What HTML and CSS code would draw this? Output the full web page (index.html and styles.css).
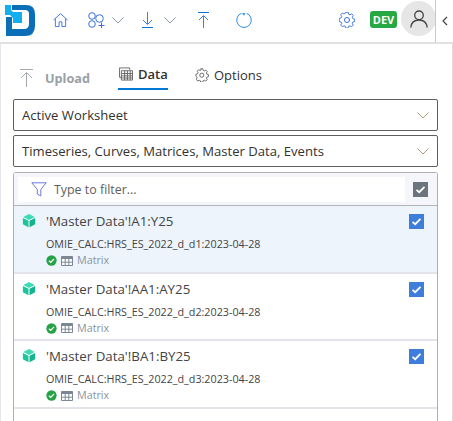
FILE: index.html
```html
<!DOCTYPE html>
<html lang="en">
<head>
    <meta charset="UTF-8">
    <meta name="viewport" content="width=device-width, initial-scale=1.0">
    <title>Data Upload</title>
    <link rel="stylesheet" href="styles.css">
</head>
<body>
    <svg class="sprites" width="0" height="0" aria-hidden="true">
        <symbol id="cube" viewBox="0 0 16 16">
            <path d="M8 .5 14.5 4 8 7.4 1.5 4z" fill="#3bdcb4"/>
            <path d="M1 5 7.4 8.4V15.6L1 12.2z" fill="#1cc49c"/>
            <path d="M15 5 8.6 8.4V15.6L15 12.2z" fill="#14b48e"/>
        </symbol>
        <symbol id="ok" viewBox="0 0 12 12">
            <circle cx="6" cy="6" r="5.6" fill="#25a244"/>
            <path d="M3.2 6.2 5.2 8.1 8.8 4.2" fill="none" stroke="#fff" stroke-width="1.4"/>
        </symbol>
        <symbol id="grid" viewBox="0 0 12 10">
            <path d="M.5.5h11v9H.5z" fill="#fff" stroke="#7d8794"/>
            <path d="M.5.5h11v2.5H.5z" fill="#7d8794"/>
            <path d="M4.2 3v6.5M7.8 3v6.5M.5 6.2h11" stroke="#7d8794" fill="none"/>
        </symbol>
        <symbol id="tick" viewBox="0 0 15 15">
            <path d="M3.5 7.8 6.2 10.2 11.5 4.8" fill="none" stroke="#fff" stroke-width="1.8"/>
        </symbol>
        <symbol id="chev" viewBox="0 0 12 7">
            <path d="M.5.5 6 6 11.5.5" fill="none" stroke="currentColor"/>
        </symbol>
    </svg>

    <header class="topbar">
        <svg class="logo" viewBox="0 0 31 32">
            <path d="M1 13H7V25H19Q24 25 24 20V10Q24 6 20 6H7V1H21Q30 1 30 10V22Q30 32 20 32H1z" fill="#0b6fb8"/>
            <path d="M0 1H6V6L8 8H17V19H8V14L5 11H0z" fill="#12aef0"/>
        </svg>
        <div class="tools">
            <svg class="tool home" viewBox="0 0 16 15"><path d="M.5 7.500 8 .7l7.500 6.800M2.500 6v8.500h4V9.500h3v5h4V6" /></svg>
            <svg class="tool group" viewBox="0 0 17 16"><circle cx="4" cy="4" r="3.300"/><circle cx="4" cy="12" r="3.300"/><circle cx="11.500" cy="6.500" r="3.800"/><path d="M10.500 13.500h6M13.500 10.500v5.500"/></svg>
            <svg class="chevron chev-group"><use href="#chev"/></svg>
            <svg class="tool arrow arrow-down" viewBox="0 0 11 16"><path d="M5.500 0v12M1 8l4.500 4.500L10 8" /><path d="M0 15.500h11" stroke="#0078d4"/></svg>
            <svg class="chevron chev-down"><use href="#chev"/></svg>
            <svg class="tool arrow arrow-up" viewBox="0 0 11 16"><path d="M0 .5h11" stroke="#0078d4"/><path d="M5.500 16V4M1 8l4.500-4.500L10 8"/></svg>
            <svg class="tool refresh" viewBox="0 0 16 16"><path d="M5.500 1.300A7.300 7.300 0 1 0 10.500 1.300" stroke="#2a8be0"/><path d="M5.800 1.500 9 .7 8.300 3.800z" fill="#2a8be0" stroke="none"/></svg>
        </div>
        <div class="account">
            <svg class="tool gear" viewBox="0 0 16 16"><path d="M6.700.8h2.600l.4 2 1.500.7 1.800-1 1.700 1.900-1.100 1.700.6 1.500 2 .6v2.400l-2 .6-.6 1.400 1 1.800-1.800 1.800-1.700-1-1.500.6-.4 1.900H6.700l-.5-1.900-1.400-.6-1.700 1-1.800-1.800 1-1.800-.6-1.400-2-.6V7.300l2-.6.6-1.500-1.100-1.700 1.800-1.900 1.700 1 1.500-.7z" transform="translate(.5 -.5) scale(.94)"/><circle cx="8" cy="8" r="2.500"/></svg>
            <span class="badge">DEV</span>
            <span class="avatar">
                <svg viewBox="0 0 18 18"><circle cx="9" cy="5.300" r="4.300"/><path d="M.8 17.500c.5-4.500 3.500-7.500 8.200-7.500s7.700 3 8.200 7.500"/></svg>
            </span>
        </div>
        <button class="collapse" type="button"><svg viewBox="0 0 6 10"><path d="M5 1 1 5l4 4"/></svg></button>
    </header>

    <main class="panel">
        <nav class="tabs">
            <div class="tab tab-upload">
                <svg class="tab-icon upload-icon" viewBox="0 0 13 18"><path d="M0 .5h13M6.500 18V4M1 9l5.500-5.500L12 9"/></svg>
                <span>Upload</span>
            </div>
            <div class="tab tab-data">
                <svg class="tab-icon" viewBox="0 0 15 14"><path d="M.5 2.500V.5h11v2M2.500 3.500h12v10h-12zM2.500 6.500h12M2.500 9h12M2.500 11.300h12M6 3.500v10M9 3.500v10M12 3.500v10M.5 2.500v8h2"/></svg>
                <span>Data</span>
            </div>
            <div class="tab tab-options">
                <svg class="tab-icon" viewBox="0 0 14 15"><path d="M5.600.8h2.300l.4 1.700 1.300.6 1.500-.9 1.500 1.700-.9 1.400.5 1.300 1.700.5v2.100l-1.700.5-.5 1.200.9 1.500-1.600 1.600-1.400-.9-1.300.5-.4 1.600H5.600l-.4-1.600-1.200-.5-1.500.9L.9 12l.9-1.500-.5-1.200L.5 8.800V6.700l1.700-.5.5-1.300-.9-1.400 1.600-1.700 1.500.9 1.200-.6z" /><circle cx="6.800" cy="7.700" r="2.200"/></svg>
                <span>Options</span>
            </div>
        </nav>

        <div class="select"><span>Active Worksheet</span><svg class="select-arrow"><use href="#chev"/></svg></div>
        <div class="select"><span>Timeseries, Curves, Matrices, Master Data, Events</span><svg class="select-arrow"><use href="#chev"/></svg></div>

        <section class="list">
            <div class="filter-row">
                <div class="filter">
                    <svg viewBox="0 0 16 15"><path d="M.8.8h14.400L9.800 7.500v6.500l-3.500-2V7.500z"/></svg>
                    <span>Type to filter...</span>
                </div>
                <span class="check check-all"><svg><use href="#tick"/></svg></span>
            </div>

            <article class="item selected">
                <svg class="cube"><use href="#cube"/></svg>
                <div class="item-body">
                    <div class="item-title">'Master Data'!A1:Y25</div>
                    <div class="item-id">OMIE_CALC:HRS_ES_2022_d_d1:2023-04-28</div>
                    <div class="item-type"><svg class="ok"><use href="#ok"/></svg><svg class="grid"><use href="#grid"/></svg><span>Matrix</span></div>
                </div>
                <span class="check"><svg><use href="#tick"/></svg></span>
            </article>
            <article class="item">
                <svg class="cube"><use href="#cube"/></svg>
                <div class="item-body">
                    <div class="item-title">'Master Data'!AA1:AY25</div>
                    <div class="item-id">OMIE_CALC:HRS_ES_2022_d_d2:2023-04-28</div>
                    <div class="item-type"><svg class="ok"><use href="#ok"/></svg><svg class="grid"><use href="#grid"/></svg><span>Matrix</span></div>
                </div>
                <span class="check"><svg><use href="#tick"/></svg></span>
            </article>
            <article class="item">
                <svg class="cube"><use href="#cube"/></svg>
                <div class="item-body">
                    <div class="item-title">'Master Data'!BA1:BY25</div>
                    <div class="item-id">OMIE_CALC:HRS_ES_2022_d_d3:2023-04-28</div>
                    <div class="item-type"><svg class="ok"><use href="#ok"/></svg><svg class="grid"><use href="#grid"/></svg><span>Matrix</span></div>
                </div>
                <span class="check"><svg><use href="#tick"/></svg></span>
            </article>
        </section>
    </main>
</body>
</html>
```

FILE: styles.css
```css
html, body {
    height: 421px;
    overflow: hidden;
}
body {
    margin: 0;
    background-color: white;
    color: #323130;
    font-family: "Open Sans", "Noto Sans", sans-serif;
    font-size: 13px;
}
.sprites {
    display: block;
    height: 0;
}
svg {
    display: block;
    flex: none;
}

/* top bar */
.topbar {
    display: flex;
    align-items: flex-start;
    height: 42px;
    padding-left: 5px;
    border-bottom: 2px solid #e1e1e1;
}
.logo {
    width: 31px;
    height: 32px;
    margin-top: 4px;
}
.tools {
    display: flex;
    align-items: center;
    height: 40px;
    margin-left: 17px;
    width: 216px;
}
.tool {
    fill: none;
    stroke: #3a6fe0;
    stroke-width: 1;
}
.home {
    width: 15px;
    height: 14px;
}
.group {
    width: 17px;
    height: 16px;
    margin-left: 20px;
}
.chevron {
    width: 12px;
    height: 7px;
    color: #8a97a8;
}
.chev-group {
    margin-left: 7px;
}
.arrow {
    width: 11px;
    height: 16px;
    stroke: #3b7fe0;
}
.arrow-down {
    margin-left: 18px;
}
.chev-down {
    margin-left: 11px;
}
.arrow-up {
    margin-left: 22px;
}
.refresh {
    width: 16px;
    height: 16px;
    margin-left: 27px;
}
.account {
    display: flex;
    align-items: flex-start;
    margin-left: 70px;
}
.gear {
    width: 16px;
    height: 16px;
    margin-top: 12px;
}
.badge {
    margin: 11px 0 0 15px;
    width: 27px;
    height: 17px;
    background-color: #28a745;
    border-radius: 3px;
    color: white;
    font-size: 11px;
    font-weight: 700;
    line-height: 17px;
    text-align: center;
}
.avatar {
    display: flex;
    align-items: center;
    justify-content: center;
    width: 35px;
    height: 35px;
    margin: 1px 0 0 4px;
    border-radius: 50%;
    background-color: #e6e6e6;
}
.avatar svg {
    width: 18px;
    height: 18px;
    fill: none;
    stroke: #444;
    stroke-width: 1.3;
}
.collapse {
    width: 12px;
    height: 42px;
    margin-left: -1px;
    padding: 0 0 0 6px;
    border: none;
    border-left: 1px solid #c8c8c8;
    background: transparent;
}
.collapse svg {
    width: 6px;
    height: 10px;
    fill: none;
    stroke: #444;
    stroke-width: 1.2;
}

/* panel */
.panel {
    padding: 0 14px 0 12px;
    border-left: 1px solid #e6e6ec;
    border-right: 1px solid #dcdcdc;
    height: 379px;
    overflow: hidden;
}
.tabs {
    display: flex;
    align-items: flex-end;
    height: 46px;
    margin-bottom: 9px;
}
.tab {
    display: flex;
    align-items: center;
    font-size: 13px;
}
.tab-icon {
    width: 14px;
    height: 14px;
    fill: none;
    stroke: #555;
    stroke-width: 0.9;
}
.tab-upload {
    width: 105px;
    padding-left: 7px;
    padding-bottom: 3px;
    box-sizing: border-box;
    color: #9aa0a6;
    font-size: 12.700px;
    font-weight: 700;
}
.upload-icon {
    width: 13px;
    height: 18px;
    stroke: #9aa0a6;
    margin-right: 12px;
}
.tab-data {
    width: 50px;
    height: 26px;
    box-sizing: border-box;
    padding: 0 0 4px 1px;
    gap: 5px;
    border-bottom: 2px solid #0078d4;
    font-weight: 600;
}
.tab-options {
    height: 26px;
    box-sizing: border-box;
    padding-bottom: 4px;
    margin-left: 27px;
    gap: 5px;
}
.select {
    display: flex;
    align-items: center;
    justify-content: space-between;
    box-sizing: border-box;
    height: 32px;
    padding: 0 8px;
    margin-bottom: 4px;
    border: 1px solid #605e5c;
    border-radius: 2px;
    font-size: 13.100px;
}
.select-arrow {
    width: 12px;
    height: 7px;
    color: #b09a80;
}

/* list */
.list {
    border: 1px solid #b0b0b0;
    border-bottom: none;
    border-radius: 3px 3px 0 0;
    margin-top: 5px;
    height: 260px;
}
.filter-row {
    display: flex;
    align-items: center;
    height: 32px;
    padding: 0 9px 0 4px;
    background-color: #f5f6fb;
    border-bottom: 1px solid #b4b4b4;
}
.filter {
    display: flex;
    align-items: center;
    gap: 7px;
    flex: 1;
    height: 25px;
    padding-left: 13px;
    margin-right: 8px;
    background-color: white;
    color: #605e5c;
    font-size: 12.400px;
}
.filter svg {
    width: 16px;
    height: 15px;
    fill: none;
    stroke: #6a78d8;
}
.check {
    display: block;
    width: 15px;
    height: 15px;
    margin-top: 2px;
    background-color: #3f7ddb;
}
.check svg {
    width: 15px;
    height: 15px;
}
.check-all {
    margin-top: 0;
    background-color: #6c757d;
}
.item {
    display: flex;
    align-items: flex-start;
    box-sizing: border-box;
    height: 67.500px;
    padding: 6px 13px 0 8px;
    border-bottom: 2px solid #e3e3ea;
}
.item.selected {
    background-color: #edf4fc;
}
.cube {
    width: 14px;
    height: 15px;
    margin-top: 1px;
}
.item-body {
    flex: 1;
    margin-left: 10px;
}
.item-title {
    font-size: 13.300px;
    line-height: 18px;
    color: #444;
}
.item-id {
    margin-top: 6px;
    font-size: 10.750px;
    line-height: 17px;
    color: #444;
}
.item-type {
    display: flex;
    align-items: center;
    gap: 4px;
    font-size: 10.750px;
    line-height: 15px;
    color: #8a94a0;
}
.ok {
    width: 11px;
    height: 11px;
}
.grid {
    width: 12px;
    height: 10px;
}
```
